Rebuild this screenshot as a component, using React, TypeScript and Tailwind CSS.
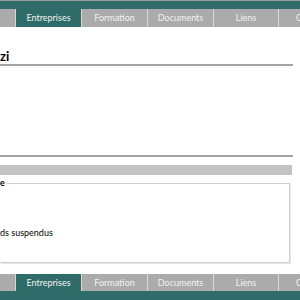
import React from "react";

const tabs = [
  { label: "", w: "w-[15px]", active: false },
  { label: "Entreprises", w: "w-[65px]", active: true },
  { label: "Formation", w: "w-[65px]", active: false },
  { label: "Documents", w: "w-[65px]", active: false },
  { label: "Liens", w: "w-[64px]", active: false },
  { label: "Contact", w: "w-[65px]", active: false },
];

function TabRow({ h }: { h: string }) {
  return (
    <div className={`flex ${h} shrink-0 gap-px bg-[#d8d8d8]`}>
      {tabs.map((t, i) => (
        <div
          key={i}
          className={`${t.w} shrink-0 flex items-center justify-center overflow-hidden whitespace-nowrap text-[9px] text-[#f2f2f2] ${
            t.active ? "bg-[#2f6b69]" : "bg-[#ababab]"
          }`}
        >
          {t.label}
        </div>
      ))}
    </div>
  );
}

export default function App() {
  return (
    <div
      className="w-[300px] h-[300px] overflow-hidden bg-white flex flex-col"
      style={{ fontFamily: "Lato, 'Open Sans', sans-serif" }}
    >
      <div className="h-px shrink-0 bg-[#9a9a9a]" />
      <div className="h-[8px] shrink-0 bg-[#2f6b69]" />
      <TabRow h="h-[18px]" />
      <div className="h-[24px] shrink-0" />
      <div className="h-[12px] shrink-0 flex items-end">
        <span className="text-[13px] font-bold leading-none text-black">zi</span>
      </div>
      <div className="h-px shrink-0" />
      <div className="w-[293px] h-[2px] shrink-0 bg-[#a3a3a3]" />
      <div className="h-[89px] shrink-0" />
      <div className="w-[293px] h-[2px] shrink-0 bg-[#a3a3a3]" />
      <div className="h-[8px] shrink-0" />
      <div className="w-[292px] h-[10px] shrink-0 bg-[#c3c3c3]" />
      <div className="h-[8px] shrink-0" />
      <div className="relative w-[290px] h-[80px] shrink-0 border-t border-r border-b border-[#cfcfcf] shadow-[1px_1px_0_#e6e6e6]">
        <span className="absolute -top-[6px] left-0 bg-white pr-[2px] text-[9px] font-bold leading-none text-black">
          e
        </span>
        <div className="absolute top-[44px] left-0 text-[9px] leading-none text-black">
          ds suspendus
        </div>
      </div>
      <div className="h-[11px] shrink-0" />
      <TabRow h="h-[17px]" />
      <div className="h-[9px] shrink-0 bg-[#2f6b69]" />
    </div>
  );
}
